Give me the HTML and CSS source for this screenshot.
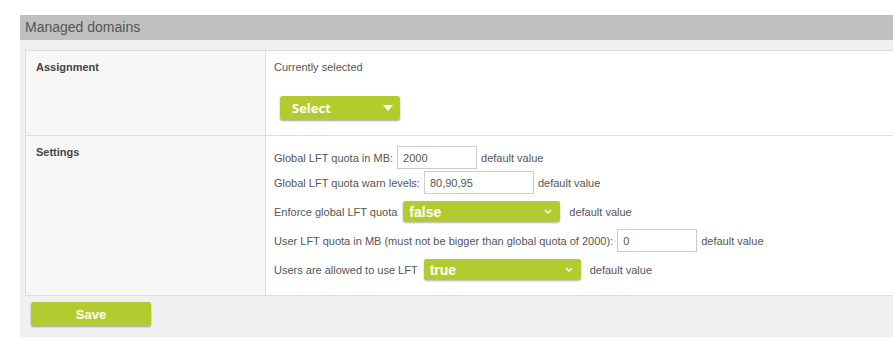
FILE: index.html
```html
<!DOCTYPE html>
<html lang="en">
<head>
    <meta charset="UTF-8">
    <title>Managed domains</title>
    <link rel="stylesheet" href="styles.css">
</head>
<body>

    <div class="panel">
        <div class="panel-title">Managed domains</div>
        <div class="panel-body">
            <table class="settings-table">
                <tr class="row-assign">
                    <th>Assignment</th>
                    <td>
                        <div class="current">Currently selected</div>
                        <div class="select-btn">
                            <span>Select</span>
                            <svg width="10" height="6" viewBox="0 0 10 6"><path d="M0 0 L10 0 L5 6 Z" fill="#fff"/></svg>
                        </div>
                    </td>
                </tr>
                <tr class="row-settings">
                    <th>Settings</th>
                    <td>
                        <div class="line">
                            <span>Global LFT quota in MB:</span>
                            <input type="text" class="field" value="2000">
                            <span>default value</span>
                        </div>
                        <div class="line tight">
                            <span>Global LFT quota warn levels:</span>
                            <input type="text" class="field wide" value="80,90,95">
                            <span>default value</span>
                        </div>
                        <div class="line">
                            <span>Enforce global LFT quota</span>
                            <div class="dropdown">
                                <span>false</span>
                                <svg width="8" height="5" viewBox="0 0 8 5"><path d="M1 1 L4 4 L7 1" fill="none" stroke="#fff" stroke-width="1.3"/></svg>
                            </div>
                            <span>default value</span>
                        </div>
                        <div class="line">
                            <span>User LFT quota in MB (must not be bigger than global quota of 2000):</span>
                            <input type="text" class="field" value="0">
                            <span>default value</span>
                        </div>
                        <div class="line">
                            <span>Users are allowed to use LFT</span>
                            <div class="dropdown">
                                <span>true</span>
                                <svg width="8" height="5" viewBox="0 0 8 5"><path d="M1 1 L4 4 L7 1" fill="none" stroke="#fff" stroke-width="1.3"/></svg>
                            </div>
                            <span>default value</span>
                        </div>
                    </td>
                </tr>
            </table>
            <button class="save-btn">Save</button>
        </div>
    </div>

</body>
</html>
```

FILE: styles.css
```css
body {
    margin: 0;
    padding: 15px 0 0 20px;
    font-family: "Liberation Sans", Arial, sans-serif;
    color: #555;
    overflow: hidden;
    background-color: #fff;
}
.panel {
    width: 1000px;
    background-color: #f0f0f0;
}
.panel-title {
    height: 25px;
    line-height: 24px;
    padding-left: 5px;
    background-color: #c0c0c0;
    font-size: 14px;
    color: #555;
}
.panel-body {
    padding: 10px 5px 10px 5px;
}
.settings-table {
    width: 990px;
    border-collapse: collapse;
    border: 1px solid #ddd;
    font-size: 11px;
}
.settings-table th,
.settings-table td {
    border: 1px solid #ddd;
    vertical-align: top;
    text-align: left;
}
.settings-table th {
    width: 219px;
    padding: 10px 10px;
    background-color: #f7f7f7;
    font-weight: bold;
    color: #444;
}
.settings-table td {
    background-color: #fff;
    padding: 10px 8px 15px 8px;
}
.current {
    line-height: 13px;
}
.select-btn {
    display: flex;
    align-items: center;
    justify-content: space-between;
    box-sizing: border-box;
    width: 120px;
    height: 24px;
    margin: 22px 0 0 6px;
    padding: 0 7px 0 12px;
    background-color: #b3cb2e;
    border-radius: 3px;
    box-shadow: 0 1px 2px rgba(0, 0, 0, 0.35);
    color: #fff;
    font-family: "Open Sans", sans-serif;
    font-weight: bold;
    font-size: 13px;
}
.line {
    display: flex;
    align-items: center;
    margin-top: 7px;
}
.line:first-child {
    margin-top: 0;
}
.line.tight {
    margin-top: 2px;
}
.field {
    box-sizing: border-box;
    width: 80px;
    height: 23px;
    margin: 0 4px;
    padding: 0 5px;
    border: 1px solid #ccc;
    font-family: "Liberation Sans", Arial, sans-serif;
    font-size: 11px;
    color: #555;
}
.field.wide {
    width: 110px;
}
.dropdown {
    display: flex;
    align-items: center;
    justify-content: space-between;
    box-sizing: border-box;
    width: 157px;
    height: 21px;
    margin: 0 9px 0 6px;
    padding: 0 8px 0 6px;
    background-color: #b3cb2e;
    border-radius: 3px;
    box-shadow: 0 1px 2px rgba(0, 0, 0, 0.3);
    color: #fff;
    font-weight: bold;
    font-size: 14px;
}
.save-btn {
    display: block;
    width: 120px;
    height: 24px;
    margin: 6px 0 1px 6px;
    border: none;
    border-radius: 3px;
    background-color: #b3cb2e;
    box-shadow: 0 1px 2px rgba(0, 0, 0, 0.35);
    color: #fff;
    font-family: "Liberation Sans", Arial, sans-serif;
    font-weight: bold;
    font-size: 13px;
    cursor: pointer;
}
```
